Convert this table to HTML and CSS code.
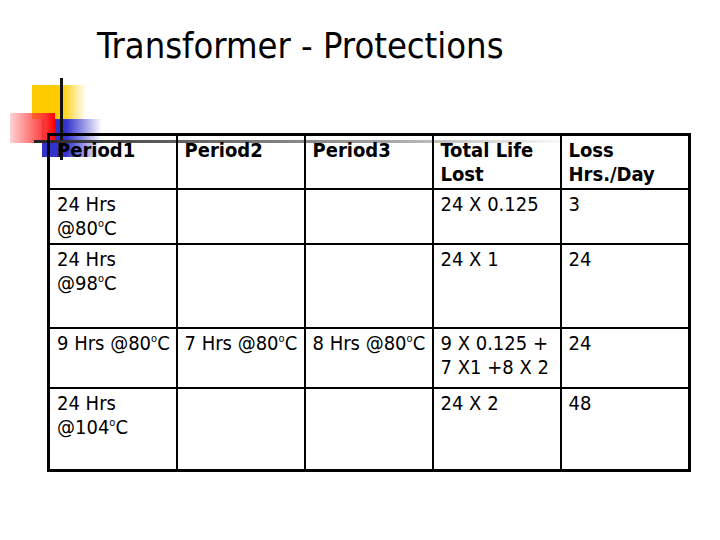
FILE: index.html
```html
<!DOCTYPE html>
<html>
<head>
<meta charset="utf-8">
<link rel="stylesheet" href="styles.css">
</head>
<body>
<div class="slide">
  <div class="deco" aria-hidden="true">
    <div class="sq-yellow"></div>
    <div class="sq-blue"></div>
    <div class="sq-red"></div>
    <div class="line-v"></div>
    <div class="line-h"></div>
  </div>
  <h1 class="title">Transformer - Protections</h1>
  <table class="grid">
    <colgroup>
      <col class="c1"><col class="c2"><col class="c3"><col class="c4"><col class="c5">
    </colgroup>
    <tr class="r-head">
      <th>Period1</th>
      <th>Period2</th>
      <th>Period3</th>
      <th>Total Life<br>Lost</th>
      <th>Loss<br>Hrs./Day</th>
    </tr>
    <tr class="r1">
      <td>24 Hrs<br>@80<sup class="deg">o</sup>C</td>
      <td></td>
      <td></td>
      <td>24 X 0.125</td>
      <td>3</td>
    </tr>
    <tr class="r2">
      <td>24 Hrs<br>@98<sup class="deg">o</sup>C</td>
      <td></td>
      <td></td>
      <td>24 X 1</td>
      <td>24</td>
    </tr>
    <tr class="r3">
      <td>9 Hrs @80<sup class="deg">o</sup>C</td>
      <td>7 Hrs @80<sup class="deg">o</sup>C</td>
      <td>8 Hrs @80<sup class="deg">o</sup>C</td>
      <td>9 X 0.125 +<br>7 X1 +8 X 2</td>
      <td>24</td>
    </tr>
    <tr class="r4">
      <td>24 Hrs<br>@104<sup class="deg">o</sup>C</td>
      <td></td>
      <td></td>
      <td>24 X 2</td>
      <td>48</td>
    </tr>
  </table>
</div>
</body>
</html>
```

FILE: styles.css
```css
html, body {
  margin: 0;
  padding: 0;
  background: #ffffff;
}

.slide {
  position: relative;
  width: 720px;
  height: 540px;
  overflow: hidden;
  font-family: "DejaVu Sans Condensed", "DejaVu Sans", sans-serif;
  font-stretch: condensed;
  color: #000;
}

.deco {
  position: absolute;
  left: 0;
  top: 0;
  width: 720px;
  height: 540px;
  z-index: 0;
}

.sq-yellow {
  position: absolute;
  left: 32px;
  top: 85px;
  width: 54px;
  height: 34px;
  background: linear-gradient(to right, #ffcc00 0%, #ffcc00 55%, rgba(255, 204, 0, 0) 100%);
}

.sq-blue {
  position: absolute;
  left: 42px;
  top: 119px;
  width: 60px;
  height: 38px;
  background: linear-gradient(to right, #3333cc 0%, #3333cc 40%, rgba(51, 51, 204, 0) 100%);
}

.sq-red {
  position: absolute;
  left: 10px;
  top: 113px;
  width: 45px;
  height: 30px;
  background: linear-gradient(to left, #ff0000 0%, #ff3333 20%, rgba(255, 80, 80, 0.25) 100%);
}

.line-v {
  position: absolute;
  left: 60px;
  top: 78px;
  width: 3px;
  height: 82px;
  background: #111;
}

.line-h {
  position: absolute;
  left: 34px;
  top: 140px;
  width: 540px;
  height: 3px;
  background: linear-gradient(to right, #222 0%, #555 20%, #999 60%, rgba(200, 200, 200, 0) 100%);
}

.title {
  position: relative;
  z-index: 1;
  margin: 0;
  padding: 24px 0 0 97px;
  height: 44px;
  font-size: 36px;
  line-height: 44px;
  font-weight: normal;
}

.grid {
  position: relative;
  z-index: 1;
  margin: 65px 0 0 47px;
  width: 643px;
  table-layout: fixed;
  border-collapse: collapse;
  border: 3px solid #000;
  font-size: 20px;
  line-height: 24px;
}

.c1, .c2, .c3, .c4 { width: 128px; }
.c5 { width: 129px; }

.grid th,
.grid td {
  border: 2px solid #000;
  padding: 2px 4px 0 7px;
  vertical-align: top;
  text-align: left;
}

.grid th {
  font-weight: bold;
}

.r-head { height: 54px; }
.r1 { height: 55px; }
.r2 { height: 84px; }
.r3 { height: 60px; }
.r4 { height: 83px; }

.deg {
  font-size: 11px;
  line-height: 0;
  vertical-align: 8px;
}
```
